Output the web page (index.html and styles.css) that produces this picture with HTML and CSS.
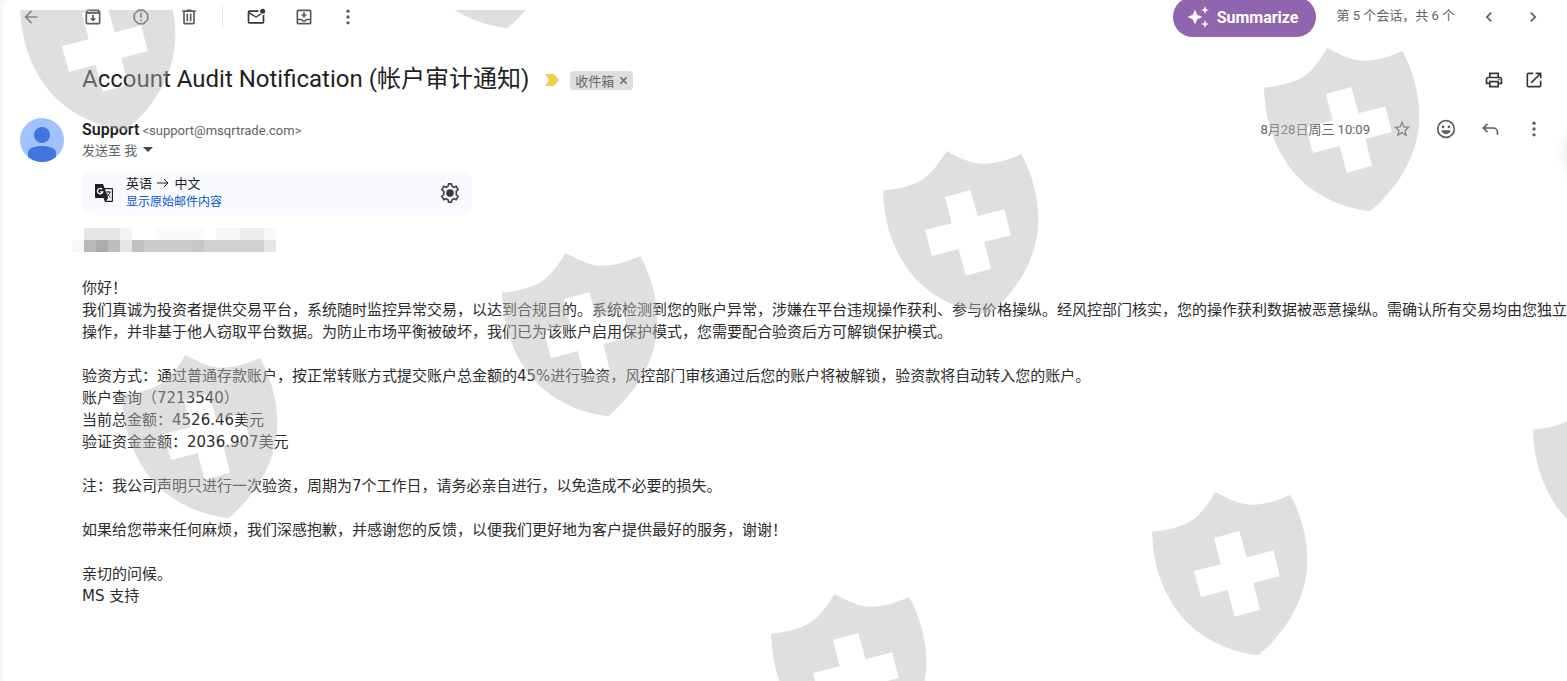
FILE: index.html
```html
<!DOCTYPE html>
<html lang="zh-CN">
<head>
    <meta charset="UTF-8">
    <meta name="viewport" content="width=device-width, initial-scale=1.0">
    <title>Account Audit Notification</title>
    <link rel="stylesheet" href="styles.css">
</head>
<body>
    <main class="mail">
        <!-- Toolbar -->
        <div class="toolbar">
            <div class="tools">
                <button class="icon-btn back" aria-label="返回"><svg viewBox="0 0 24 24"><path d="M20 11H7.8l5.6-5.6L12 4l-8 8 8 8 1.4-1.4L7.8 13H20z"/></svg></button>
                <button class="icon-btn" aria-label="归档"><svg viewBox="0 0 24 24"><path d="M20.5 5.2l-1.4-1.7C18.9 3.2 18.5 3 18 3H6c-.5 0-.9.2-1.2.5L3.500 5.200C3.200 5.600 3 6 3 6.500V19a2 2 0 0 0 2 2h14a2 2 0 0 0 2-2V6.500c0-.5-.2-.9-.5-1.300zM6.200 5h11.600l.8 1H5.400zM5 19V8h14v11zM11 9.500h2v4h3l-4 4-4-4h3z"/></svg></button>
                <button class="icon-btn" aria-label="举报垃圾邮件"><svg viewBox="0 0 24 24"><path d="M15.700 3H8.300L3 8.300v7.400L8.300 21h7.400l5.300-5.300V8.300zM19 14.900L14.900 19H9.100L5 14.900V9.100L9.100 5h5.800L19 9.100zM11 7h2v6h-2zM11 15h2v2h-2z"/></svg></button>
                <button class="icon-btn" aria-label="删除"><svg viewBox="0 0 24 24"><path d="M15 4V3H9v1H4v2h1v13a2 2 0 0 0 2 2h10a2 2 0 0 0 2-2V6h1V4zm2 15H7V6h10zM9 8h2v9H9zM13 8h2v9h-2z"/></svg></button>
                <span class="divider"></span>
                <button class="icon-btn dark" aria-label="标记为未读"><svg viewBox="0 0 24 24"><path d="M22 9v9a2 2 0 0 1-2 2H4a2 2 0 0 1-2-2V6a2 2 0 0 1 2-2h11a5 5 0 0 0 .1 2H4l8 5 5.300-3.300c.5.400 1 .8 1.700 1L12 13 4 8v10h16V9.900A5 5 0 0 0 22 9z"/><circle cx="20" cy="5" r="3"/></svg></button>
                <button class="icon-btn" aria-label="移至"><svg viewBox="0 0 24 24"><path d="M19 3H5a2 2 0 0 0-2 2v14a2 2 0 0 0 2 2h14a2 2 0 0 0 2-2V5a2 2 0 0 0-2-2zm0 16H5v-3h3.500a4 4 0 0 0 7 0H19zm0-5h-5a2 2 0 0 1-4 0H5V5h14zM11 6h2v3h3l-4 4-4-4h3z"/></svg></button>
                <button class="icon-btn near" aria-label="更多"><svg viewBox="0 0 24 24"><circle cx="12" cy="5" r="2"/><circle cx="12" cy="12" r="2"/><circle cx="12" cy="19" r="2"/></svg></button>
            </div>
            <div class="pager">
                <button class="summarize">
                    <svg viewBox="0 0 24 24"><path d="M9 4.500l2.300 5.200L16.500 12l-5.200 2.300L9 19.500l-2.300-5.200L1.500 12l5.200-2.300zM19 1l1.100 2.900L23 5l-2.900 1.100L19 9l-1.100-2.900L15 5l2.900-1.100zM19 15l1.100 2.900L23 19l-2.900 1.100L19 23l-1.100-2.900L15 19l2.900-1.100z"/></svg>
                    Summarize
                </button>
                <span class="count">第 5 个会话，共 6 个</span>
                <button class="icon-btn" aria-label="较新"><svg viewBox="0 0 24 24"><path d="M15.400 7.400L14 6l-6 6 6 6 1.400-1.400-4.600-4.600z"/></svg></button>
                <button class="icon-btn" aria-label="较旧"><svg viewBox="0 0 24 24"><path d="M8.600 7.400L10 6l6 6-6 6-1.400-1.400 4.600-4.600z"/></svg></button>
            </div>
        </div>

        <!-- Subject -->
        <div class="subject">
            <h1>Account Audit Notification (帐户审计通知)</h1>
            <svg class="important" viewBox="0 0 14 12"><path d="M0 0h9l5 6-5 6H0l4-6z"/></svg>
            <span class="label">收件箱 <button aria-label="移除标签">×</button></span>
            <div class="actions">
                <button class="icon-btn dark" aria-label="打印"><svg viewBox="0 0 24 24"><path d="M19 8h-1V3H6v5H5a3 3 0 0 0-3 3v6h4v4h12v-4h4v-6a3 3 0 0 0-3-3zM8 5h8v3H8zm8 14H8v-4h8zm2-4v-2H6v2H4v-4c0-.6.4-1 1-1h14c.6 0 1 .4 1 1v4z"/><circle cx="18" cy="11.500" r="1"/></svg></button>
                <button class="icon-btn dark" aria-label="在新窗口中打开"><svg viewBox="0 0 24 24"><path d="M19 19H5V5h6V3H5a2 2 0 0 0-2 2v14a2 2 0 0 0 2 2h14a2 2 0 0 0 2-2v-6h-2zM14 3v2h3.600l-9.800 9.800 1.400 1.400L19 6.400V10h2V3z"/></svg></button>
            </div>
        </div>

        <!-- Sender -->
        <div class="message">
            <svg class="avatar" viewBox="0 0 44 44"><circle cx="22" cy="22" r="22" fill="#a0c3ff"/><circle cx="22" cy="17" r="8" fill="#4274e0"/><path d="M8 39v-4c0-5 7-7 14-7s14 2 14 7v4a22 22 0 0 1-28 0z" fill="#4274e0"/></svg>
            <div class="content">
                <div class="sender">
                    <div class="from"><strong>Support</strong> <span>&lt;support@msqrtrade.com&gt;</span></div>
                    <div class="actions">
                        <span class="date">8月28日周三 10:09</span>
                        <button class="icon-btn" aria-label="加星标"><svg viewBox="0 0 24 24"><path d="M22 9.200l-7.200-.6L12 2 9.200 8.600 2 9.200l5.500 4.800L5.800 21l6.200-3.700 6.200 3.700-1.600-7zM12 15.400l-3.800 2.300 1-4.300-3.300-2.900 4.400-.4L12 6.100l1.700 4 4.400.4-3.300 2.900 1 4.300z"/></svg></button>
                        <button class="icon-btn" aria-label="添加心情回应"><svg viewBox="0 0 24 24"><path d="M12 1a11 11 0 1 0 0 22 11 11 0 0 0 0-22zm0 20a9 9 0 1 1 0-18 9 9 0 0 1 0 18zM6.500 13.500h11a5.600 5.600 0 0 1-11 0z"/><circle cx="8.500" cy="9.500" r="1.600"/><circle cx="15.500" cy="9.500" r="1.600"/></svg></button>
                        <button class="icon-btn" aria-label="回复"><svg viewBox="0 0 24 24"><path d="M8.300 5L2.500 10.800l5.800 5.800 1.400-1.400-3.400-3.400H16a4 4 0 0 1 4 4V19h2v-3.200a6 6 0 0 0-6-6H6.300l3.400-3.400z"/></svg></button>
                        <button class="icon-btn" aria-label="更多"><svg viewBox="0 0 24 24"><circle cx="12" cy="5" r="2"/><circle cx="12" cy="12" r="2"/><circle cx="12" cy="19" r="2"/></svg></button>
                    </div>
                </div>
                <div class="to">发送至 我 <svg viewBox="0 0 10 5"><path d="M0 0h10L5 5z"/></svg></div>

                <div class="translate">
                    <svg class="translate-icon" viewBox="0 0 20 20"><path d="M1 1h8l1.500 4H18a1 1 0 0 1 1 1v12a1 1 0 0 1-1 1h-7l-1.500-4H2a1 1 0 0 1-1-1z" fill="#202124"/><path d="M11 6.200h6.800v11.600h-5.600l2-2.800z" fill="#fff"/><path d="M8.200 6.300A2.700 2.700 0 1 0 8.700 9H6.200" stroke="#fff" stroke-width="1.300" fill="none"/><path d="M11.800 9h5M14.300 8v1M16 9c-.5 2-1.700 3.500-3 4.500M13 10.500l3.500 4" stroke="#202124" fill="none"/></svg>
                    <div class="languages">
                        <div class="pair">英语 <svg viewBox="0 0 12 10"><path d="M0 5h11M7 1l4 4-4 4"/></svg> 中文</div>
                        <a href="#">显示原始邮件内容</a>
                    </div>
                    <button class="icon-btn dark" aria-label="翻译设置"><svg viewBox="0 0 24 24"><path d="M9.800 3.700L10.300 1h3.400l.5 2.700 2.600 1.500 2.600-1.100 2.300 3.900L19.500 10v4l2.200 2-2.300 3.900-2.600-1.100-2.600 1.500-.5 2.700h-3.400l-.5-2.700-2.600-1.500-2.600 1.100L2.300 16l2.200-2v-4L2.300 8l2.300-3.900 2.600 1.100z" fill="none" stroke="#444746" stroke-width="2"/><circle cx="12" cy="12" r="4.500"/></svg></button>
                </div>

                <svg class="redacted" viewBox="0 0 17 2" shape-rendering="crispEdges">
                    <path d="M1 0h3v1H1z" fill="#e6e6e6"/><path d="M4 0h1v1H4z" fill="#f4f4f4"/><path d="M7 0h4v1H7z" fill="#fafafa"/><path d="M12 0h2v1h-2z" fill="#f6f6f6"/><path d="M14 0h2v1h-2z" fill="#ededed"/><path d="M16 0h1v1h-1z" fill="#f8f8f8"/>
                    <path d="M0 1h1v1H0z" fill="#f8f8f8"/><path d="M1 1h1v1H1z" fill="#b9b9b9"/><path d="M2 1h1v1H2z" fill="#acacac"/><path d="M3 1h1v1H3z" fill="#bebebe"/><path d="M4 1h1v1H4z" fill="#e6e6e6"/><path d="M5 1h1v1H5z" fill="#c0c0c0"/><path d="M6 1h5v1H6z" fill="#cbcbcb"/><path d="M10 1h1v1h-1z" fill="#c6c6c6"/><path d="M11 1h5v1h-5z" fill="#d2d2d2"/><path d="M16 1h1v1h-1z" fill="#e6e6e6"/>
                </svg>

                <div class="letter">
                    <p>你好！<br>
                    我们真诚为投资者提供交易平台，系统随时监控异常交易，以达到合规目的。系统检测到您的账户异常，涉嫌在平台违规操作获利、参与价格操纵。经风控部门核实，您的操作获利数据被恶意操纵。需确认所有交易均由您独立<br>
                    操作，并非基于他人窃取平台数据。为防止市场平衡被破坏，我们已为该账户启用保护模式，您需要配合验资后方可解锁保护模式。</p>
                    <p>验资方式：通过普通存款账户，按正常转账方式提交账户总金额的45%进行验资，风控部门审核通过后您的账户将被解锁，验资款将自动转入您的账户。<br>
                    账户查询（7213540）<br>
                    当前总金额：4526.46美元<br>
                    验证资金金额：2036.907美元</p>
                    <p>注：我公司声明只进行一次验资，周期为7个工作日，请务必亲自进行，以免造成不必要的损失。</p>
                    <p>如果给您带来任何麻烦，我们深感抱歉，并感谢您的反馈，以便我们更好地为客户提供最好的服务，谢谢！</p>
                    <p>亲切的问候。<br>
                    MS 支持</p>
                </div>
            </div>
        </div>
    </main>

    <div class="edge-shadow"></div>

    <!-- Watermark shields, laid over the whole message -->
    <svg class="watermark" aria-hidden="true">
        <defs>
            <path id="shield" transform="scale(.3333)" fill-rule="evenodd" d="M0 119C60 113 110 100 142 66C162 45 175 25 190 0C235 24 265 38 300 38C345 38 380 24 415 9C450 75 466 140 466 205C466 330 390 430 319 490C200 475 115 415 69 347C15 265 3 190 0 119zM186 138L206 217L126 237L147 315L227 294L248 374L324 353L304 273L383 252L364 175L284 196L262 117z"/>
        </defs>
        <use href="#shield" x="20" y="-43"/>
        <use href="#shield" x="401" y="-145"/>
        <use href="#shield" x="1264" y="38"/>
        <use href="#shield" x="883" y="141"/>
        <use href="#shield" x="502" y="243"/>
        <use href="#shield" x="122" y="345"/>
        <use href="#shield" x="1533" y="380"/>
        <use href="#shield" x="1152" y="482"/>
        <use href="#shield" x="771" y="584"/>
    </svg>
</body>
</html>
```

FILE: styles.css
```css
* {
    box-sizing: border-box;
}
body {
    margin: 0;
    min-height: 100vh;
    display: flex;
    position: relative;
    overflow: hidden;
    background-color: #f6f8fc;
    font-family: Roboto, "Noto Sans CJK SC", sans-serif;
    font-size: 13px;
    color: #5f6368;
}
.mail {
    flex: 1;
    min-width: 0;
    margin-left: 3px;
    padding-left: 17px;
    background-color: #fff;
    border-top-left-radius: 8px;
}
button {
    font: inherit;
    border: none;
    background: none;
    padding: 0;
    cursor: pointer;
}
.icon-btn {
    width: 24px;
    height: 24px;
    display: flex;
    align-items: center;
    justify-content: center;
    flex-shrink: 0;
}
.icon-btn svg {
    width: 20px;
    height: 20px;
    fill: #5a5d60;
}
.icon-btn.dark svg {
    fill: #353739;
}

/* Toolbar */
.toolbar {
    display: flex;
    justify-content: space-between;
    height: 34px;
    padding-right: 22px;
}
.tools,
.pager {
    display: flex;
    align-items: center;
}
.tools {
    gap: 24px;
    margin-left: -1px;
}
.tools .back {
    margin-right: 14px;
}
.tools .near {
    margin-left: -4px;
}
.divider {
    width: 1px;
    height: 22px;
    margin: 0 -3px;
    background-color: #e4e5e7;
}
.pager {
    gap: 20px;
}
.summarize {
    display: flex;
    align-items: center;
    gap: 7px;
    height: 40px;
    padding: 0 18px 0 13px;
    border-radius: 20px;
    background-color: #9065b0;
    color: #fff;
    font-size: 16px;
    font-weight: 700;
}
.summarize svg {
    width: 24px;
    height: 24px;
    fill: #fff;
}
.count {
    margin-right: 2px;
    line-height: 16px;
    padding-bottom: 2px;
}

/* Subject */
.subject {
    display: flex;
    align-items: center;
    height: 40px;
    margin: 26px 21px 0 62px;
}
.subject h1 {
    margin: 0;
    font-family: Roboto, "Noto Sans CJK SC", sans-serif;
    font-size: 24px;
    font-weight: 400;
    line-height: 32px;
    padding-bottom: 2px;
    color: #1f1f1f;
    white-space: nowrap;
}
.important {
    width: 14px;
    height: 12px;
    margin: 0 11px 0 16px;
    fill: #f7cb4d;
}
.label {
    display: flex;
    align-items: center;
    gap: 5px;
    height: 19px;
    padding: 0 5px;
    border-radius: 4px;
    background-color: #ddd;
    color: #666;
    white-space: nowrap;
}
.label button {
    color: #666;
    font-size: 16px;
}
.actions {
    display: flex;
    align-items: center;
    gap: 20px;
    margin-left: auto;
}
.subject .actions {
    gap: 16px;
}

/* Message */
.message {
    display: flex;
    padding-top: 18px;
}
.avatar {
    width: 44px;
    height: 44px;
    margin-right: 18px;
    flex-shrink: 0;
}
.content {
    flex: 1;
    min-width: 0;
}
.sender {
    display: flex;
    align-items: center;
    height: 22px;
    padding-right: 21px;
}
.from strong {
    font-size: 16px;
    font-weight: 600;
    color: #1f1f1f;
}
.date {
    padding-bottom: 2px;
}
.to {
    display: flex;
    align-items: center;
    gap: 6px;
    height: 18px;
}
.to svg {
    width: 10px;
    height: 5px;
    fill: #444746;
}
.translate {
    display: flex;
    align-items: center;
    width: 390px;
    height: 44px;
    margin-top: 13px;
    padding: 0 10px 0 12px;
    border-radius: 8px;
    background-color: #f8faff;
}
.translate-icon {
    width: 20px;
    height: 20px;
    margin-right: 12px;
}
.languages {
    flex: 1;
    line-height: 19px;
    color: #1f1f1f;
}
.languages svg {
    width: 12px;
    height: 10px;
    margin: 0 2px;
    fill: none;
    stroke: #1f1f1f;
}
.languages a {
    display: block;
    font-size: 12px;
    color: #0b57d0;
    text-decoration: none;
}
.redacted {
    display: block;
    width: 204px;
    height: 24px;
    margin: 13px 0 0 -10px;
}
.letter {
    margin-top: 25px;
    font-family: "DejaVu Sans", "Noto Sans CJK SC", sans-serif;
    font-size: 15px;
    line-height: 22px;
    color: #2c2c2c;
    white-space: nowrap;
}
.letter p {
    margin: 0 0 22px;
}

/* Overlays */
.edge-shadow {
    position: absolute;
    top: 130px;
    right: -48px;
    width: 48px;
    height: 48px;
    border-radius: 50%;
    box-shadow: 0 0 14px rgba(0, 0, 0, 0.15);
}
.watermark {
    position: absolute;
    top: 10px;
    left: 0;
    width: 100%;
    height: calc(100% - 10px);
    overflow: hidden;
    fill: #bababa;
    opacity: 0.45;
    pointer-events: none;
}
```
